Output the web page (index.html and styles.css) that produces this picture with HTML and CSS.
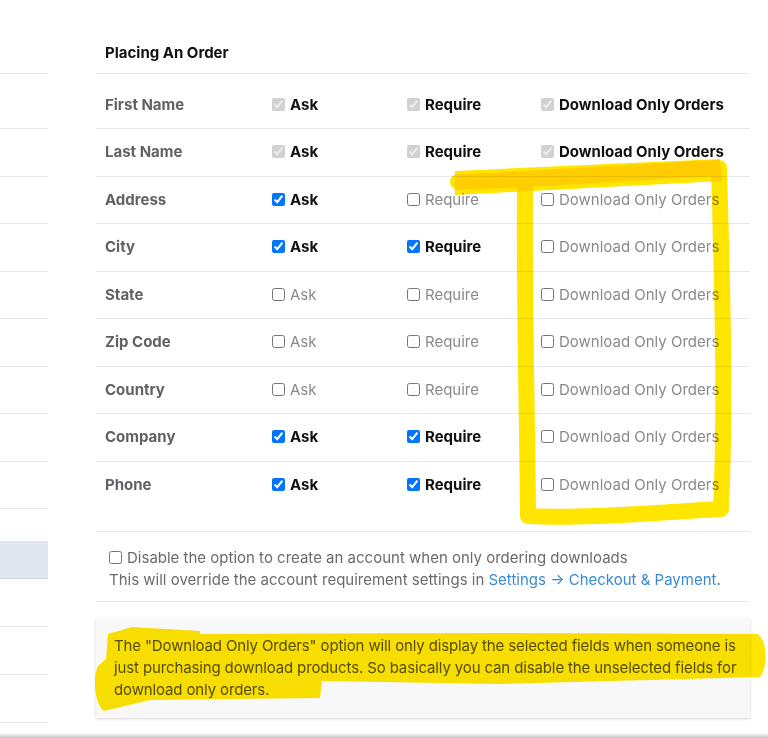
FILE: index.html
```html
<!doctype html>
<html lang="en">
<head>
<meta charset="UTF-8">
<meta name="viewport" content="width=device-width, initial-scale=1">
<title>Placing An Order</title>
<link rel="stylesheet" href="styles.css">
</head>

<body>
<div class="page">
<aside class="side">
    <div class="sideItem sideTop"></div>
    <div class="sideItem sideFirst"></div>
    <div class="sideItem"></div>
    <div class="sideItem"></div>
    <div class="sideItem"></div>
    <div class="sideItem"></div>
    <div class="sideItem"></div>
    <div class="sideItem"></div>
    <div class="sideItem"></div>
    <div class="sideItem"></div>
    <div class="sideGap"></div>
    <div class="sideItem sideActive"></div>
    <div class="sideItem sideWide"></div>
    <div class="sideItem sideWide"></div>
    <div class="sideItem sideWide"></div>
</aside>

<main class="content">
    <h3 class="title">Placing An Order</h3>

    <div class="row rowFirst">
        <div class="field">First Name</div>
        <label class="opt on"><input type="checkbox" checked disabled>Ask</label>
        <label class="opt on"><input type="checkbox" checked disabled>Require</label>
        <label class="opt on"><input type="checkbox" checked disabled>Download Only Orders</label>
    </div>
    <div class="row">
        <div class="field">Last Name</div>
        <label class="opt on"><input type="checkbox" checked disabled>Ask</label>
        <label class="opt on"><input type="checkbox" checked disabled>Require</label>
        <label class="opt on"><input type="checkbox" checked disabled>Download Only Orders</label>
    </div>
    <div class="row">
        <div class="field">Address</div>
        <label class="opt on"><input type="checkbox" checked>Ask</label>
        <label class="opt"><input type="checkbox">Require</label>
        <label class="opt"><input type="checkbox">Download Only Orders</label>
    </div>
    <div class="row">
        <div class="field">City</div>
        <label class="opt on"><input type="checkbox" checked>Ask</label>
        <label class="opt on"><input type="checkbox" checked>Require</label>
        <label class="opt"><input type="checkbox">Download Only Orders</label>
    </div>
    <div class="row">
        <div class="field">State</div>
        <label class="opt"><input type="checkbox">Ask</label>
        <label class="opt"><input type="checkbox">Require</label>
        <label class="opt"><input type="checkbox">Download Only Orders</label>
    </div>
    <div class="row">
        <div class="field">Zip Code</div>
        <label class="opt"><input type="checkbox">Ask</label>
        <label class="opt"><input type="checkbox">Require</label>
        <label class="opt"><input type="checkbox">Download Only Orders</label>
    </div>
    <div class="row">
        <div class="field">Country</div>
        <label class="opt"><input type="checkbox">Ask</label>
        <label class="opt"><input type="checkbox">Require</label>
        <label class="opt"><input type="checkbox">Download Only Orders</label>
    </div>
    <div class="row">
        <div class="field">Company</div>
        <label class="opt on"><input type="checkbox" checked>Ask</label>
        <label class="opt on"><input type="checkbox" checked>Require</label>
        <label class="opt"><input type="checkbox">Download Only Orders</label>
    </div>
    <div class="row rowLast">
        <div class="field">Phone</div>
        <label class="opt on"><input type="checkbox" checked>Ask</label>
        <label class="opt on"><input type="checkbox" checked>Require</label>
        <label class="opt"><input type="checkbox">Download Only Orders</label>
    </div>

    <div class="account">
        <label class="accountOpt"><input type="checkbox">Disable the option to create an account when only ordering downloads</label>
        <div>This will override the account requirement settings in <a href="#">Settings &rarr; Checkout &amp; Payment</a>.</div>
    </div>

    <div class="note">
        The "Download Only Orders" option will only display the selected fields when someone is just purchasing download products. So basically you can disable the unselected fields for download only orders.
    </div>
</main>
</div>

<!-- hand-drawn highlight marks over the page -->
<svg class="marks" width="768" height="738" viewBox="0 0 768 738">
    <path class="markLine" d="M458,182 C560,178 650,171 719,168 C722,280 726,400 721,509 C650,513 580,519 528,516 C527,400 524,300 525,187"></path>
    <path class="markFill" d="M455,171 L720,159 L722,181 L455,195 Z"></path>
    <path class="markFill" d="M108,634 L132,627 L200,631 L200,634 L500,633 L758,634 C768,642 768,668 760,677 L500,684 L322,681 L320,698 L150,700 L104,711 C93,703 93,672 99,665 L106,659 Z"></path>
</svg>
<div class="edge"></div>
</body>
</html>
```

FILE: styles.css
```css
*,
*:after,
*:before {
    box-sizing: border-box;
}
body {
    background: #fff;
    color: #111;
    font-family: Inter, "Noto Sans", sans-serif;
    font-size: 15px;
    line-height: 22px;
    margin: 0;
}
a {
    color: #3a8bd2;
    text-decoration: none;
}
input[type="checkbox"] {
    height: 13px;
    margin: 0 5px 0 0;
    vertical-align: -1px;
    width: 13px;
}
.page {
    display: flex;
}
.side {
    flex: 0 0 48px;
}
.sideItem {
    border-bottom: 1px solid #e6e8ec;
    height: 47.5px;
}
.sideTop {
    height: 74px;
}
.sideFirst {
    height: 55px;
}
.sideGap {
    height: 32px;
}
.sideActive {
    background: #e1e7ef;
    border-bottom-color: #cfd6e0;
    height: 38px;
}
.sideWide {
    height: 48px;
}
.content {
    margin-left: 48px;
    width: 654px;
}
.title {
    border-bottom: 1px solid #e6e8ec;
    font-size: 15px;
    font-weight: 700;
    height: 74px;
    margin: 0;
    padding: 42px 9px 0;
}
.row {
    align-items: center;
    border-bottom: 1px solid #e6e8ec;
    display: grid;
    grid-template-columns: 167px 135px 134px 1fr;
    height: 47.5px;
}
.rowFirst {
    height: 55px;
    padding-top: 7px;
}
.rowLast {
    height: 70px;
    padding-bottom: 23px;
}
.field {
    color: #616167;
    font-weight: 700;
    padding-left: 9px;
}
.opt {
    color: #8a8a8a;
    padding-left: 9px;
    white-space: nowrap;
}
.opt.on {
    color: #111;
    font-weight: 700;
}
.account {
    border-bottom: 1px solid #e6e8ec;
    color: #6b6b6b;
    padding: 15px 13px 10px;
}
.accountOpt {
    display: block;
}
.note {
    background: #f8f8f8;
    box-shadow: 0 1px 3px rgba(0, 0, 0, 0.16);
    color: #555;
    letter-spacing: -0.13px;
    margin-top: 16px;
    padding: 17px 0 17px 18px;
}
.marks {
    left: 0;
    pointer-events: none;
    position: absolute;
    top: 0;
}
.markLine {
    fill: none;
    mix-blend-mode: multiply;
    stroke: #ffe500;
    stroke-linecap: round;
    stroke-linejoin: round;
    stroke-width: 16;
}
.markFill {
    fill: #ffe500;
    mix-blend-mode: multiply;
}
.edge {
    background: linear-gradient(#fff, #c4c4c4);
    bottom: 0;
    height: 5px;
    left: 0;
    position: fixed;
    right: 0;
}
```
